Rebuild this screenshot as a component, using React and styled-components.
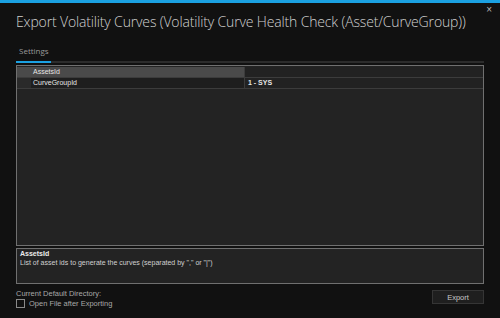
import React, { useState } from 'react';
import styled, { createGlobalStyle } from 'styled-components';

const GlobalStyle = createGlobalStyle`
    html, body {
        margin: 0;
        padding: 0;
        background: #111111;
    }
    body {
        font-family: 'Open Sans', 'Liberation Sans', sans-serif;
    }
`;

const Window = styled.div`
    width: 500px;
    height: 318px;
    display: flex;
    flex-flow: column nowrap;
    background: #111111;
    overflow: hidden;
`;

const AccentStripe = styled.div`
    height: 3px;
    flex: none;
    background: #1ba1e2;
`;

const TitleBar = styled.div`
    position: relative;
    height: 40px;
    flex: none;
    padding: 9px 16px 0;
    box-sizing: border-box;
`;

const Title = styled.h1`
    margin: 0;
    font-size: 14px;
    line-height: 20px;
    font-weight: 300;
    color: #d2d2d2;
    white-space: nowrap;
    letter-spacing: -0.15px;
`;

const CloseButton = styled.button`
    position: absolute;
    top: 2px;
    right: 8px;
    padding: 0;
    border: none;
    background: none;
    color: #b8b8b8;
    font-family: 'Liberation Sans', sans-serif;
    font-size: 10px;
    line-height: 10px;
    cursor: pointer;
`;

const Body = styled.div`
    flex: 1;
    display: flex;
    flex-flow: column nowrap;
    padding: 0 16px;
    min-height: 0;
`;

const TabStrip = styled.div`
    height: 18px;
    flex: none;
    display: flex;
    align-items: flex-end;
    border-bottom: 2px solid #2c2c2c;
    margin-bottom: 2px;
`;

const Tab = styled.div`
    position: relative;
    width: 35px;
    padding-left: 3px;
    padding-bottom: 5px;
    box-sizing: border-box;
    font-size: 8px;
    line-height: 10px;
    color: ${props => (props.active ? '#9a9a9a' : '#666')};

    &::after {
        content: '';
        position: absolute;
        left: 0;
        right: 0;
        bottom: -2px;
        height: 2px;
        background: ${props => (props.active ? '#1ba1e2' : 'transparent')};
    }
`;

const PropertyGrid = styled.div`
    flex: 1;
    min-height: 0;
    background: #232323;
    border: 1px solid #707070;
    display: flex;
    flex-flow: column nowrap;
    padding-top: 1px;
`;

const Row = styled.div`
    display: grid;
    grid-template-columns: 14px 214px 1fr;
    height: 10px;
    border-bottom: 1px solid #3c3c3c;
    font-family: 'Liberation Sans', sans-serif;
    font-size: 7px;
    line-height: 9px;
    color: #e6e6e6;
    cursor: default;
`;

const Margin = styled.div`
    background: ${props => (props.selected ? '#4a4a4a' : '#2a2a2a')};
`;

const NameCell = styled.div`
    padding-left: 2px;
    background: ${props => (props.selected ? '#4a4a4a' : '#1e1e1e')};
    border-right: 1px solid #3c3c3c;
    white-space: nowrap;
    overflow: hidden;
`;

const ValueCell = styled.div`
    padding-left: 3px;
    background: #222222;
    font-weight: ${props => (props.bold ? 700 : 400)};
    white-space: nowrap;
`;

const Splitter = styled.div`
    height: 2px;
    flex: none;
`;

const Description = styled.div`
    height: 36px;
    flex: none;
    box-sizing: border-box;
    background: #232323;
    border: 1px solid #707070;
    padding: 1px 3px;
    font-family: 'Liberation Sans', sans-serif;
    font-size: 7px;
    line-height: 8.5px;
    color: #d0d0d0;
`;

const DescTitle = styled.div`
    font-weight: 700;
    color: #ececec;
`;

const Footer = styled.div`
    height: 34px;
    flex: none;
    display: flex;
    justify-content: space-between;
    align-items: flex-start;
    padding-top: 5px;
    box-sizing: border-box;
    font-family: 'Liberation Sans', sans-serif;
    font-size: 7.5px;
    color: #a8a8a8;
`;

const FooterLeft = styled.div`
    display: flex;
    flex-flow: column nowrap;
    gap: 1px;
`;

const DirLabel = styled.div`
    line-height: 9px;
`;

const CheckRow = styled.div`
    display: flex;
    align-items: center;
    gap: 4px;
    line-height: 9px;
    color: #a8a8a8;
    cursor: pointer;
`;

const CheckBox = styled.span`
    width: 7px;
    height: 7px;
    border: 1px solid #8a8a8a;
    background: ${props => (props.checked ? '#1ba1e2' : 'transparent')};
    flex: none;
`;

const ExportButton = styled.button`
    width: 52px;
    height: 14px;
    margin-top: 1px;
    padding: 0;
    background: #1f1f1f;
    border: 1px solid #353535;
    color: #c8c8c8;
    font-family: 'Liberation Sans', sans-serif;
    font-size: 7.5px;
    cursor: pointer;
`;

const rows = [
    { name: 'AssetsId', value: '' },
    { name: 'CurveGroupId', value: '1 - SYS', bold: true },
];

const App = () => {
    const [selected, setSelected] = useState(0);
    const [openAfter, setOpenAfter] = useState(false);

    return (
        <>
            <GlobalStyle />
            <Window>
                <AccentStripe />
                <TitleBar>
                    <Title>
                        Export Volatility Curves (Volatility Curve Health Check (Asset/CurveGroup))
                    </Title>
                    <CloseButton>×</CloseButton>
                </TitleBar>
                <Body>
                    <TabStrip>
                        <Tab active>Settings</Tab>
                    </TabStrip>
                    <PropertyGrid>
                        {rows.map((row, index) => (
                            <Row key={row.name} onClick={() => setSelected(index)}>
                                <Margin selected={index === selected} />
                                <NameCell selected={index === selected}>{row.name}</NameCell>
                                <ValueCell bold={row.bold}>{row.value}</ValueCell>
                            </Row>
                        ))}
                    </PropertyGrid>
                    <Splitter />
                    <Description>
                        <DescTitle>AssetsId</DescTitle>
                        <div>List of asset ids to generate the curves (separated by "," or "|")</div>
                    </Description>
                    <Footer>
                        <FooterLeft>
                            <DirLabel>Current Default Directory:</DirLabel>
                            <CheckRow onClick={() => setOpenAfter(!openAfter)}>
                                <CheckBox checked={openAfter} />
                                Open File after Exporting
                            </CheckRow>
                        </FooterLeft>
                        <ExportButton>Export</ExportButton>
                    </Footer>
                </Body>
            </Window>
        </>
    );
};

export default App;
